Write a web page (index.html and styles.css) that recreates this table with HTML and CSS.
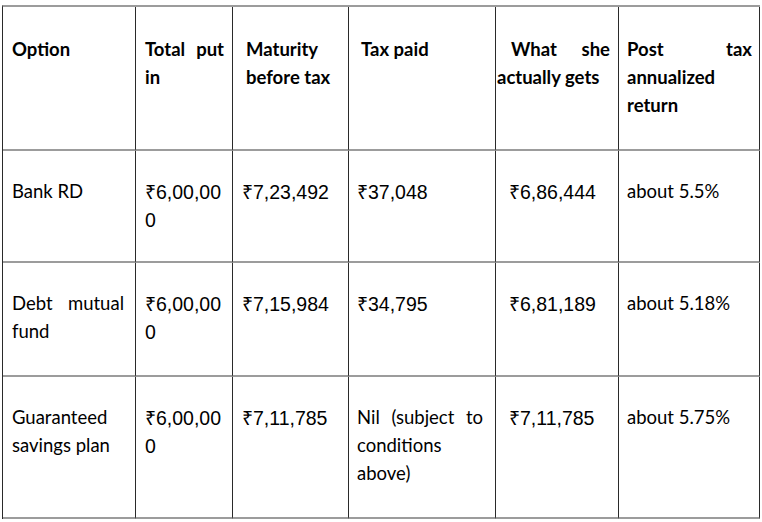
FILE: index.html
```html
<!DOCTYPE html>
<html lang="en">
<head>
<meta charset="utf-8">
<title>Options compared</title>
<link rel="stylesheet" href="styles.css">
</head>
<body>
<div class="sheet">
  <div class="cell head c1">Option</div>
  <div class="cell head c2"><span class="jline">Total put</span>in</div>
  <div class="cell head c3 h3">Maturity<br>before tax</div>
  <div class="cell head c4 h4">Tax paid</div>
  <div class="cell head c5 h5"><span class="jline ind">What she</span>actually gets</div>
  <div class="cell head c6"><span class="jline">Post tax</span>annualized<br>return</div>

  <div class="cell c1">Bank RD</div>
  <div class="cell num c2">₹6,00,00<br>0</div>
  <div class="cell num c3">₹7,23,492</div>
  <div class="cell num c4">₹37,048</div>
  <div class="cell num c5">₹6,86,444</div>
  <div class="cell c6">about 5.5%</div>

  <div class="cell c1"><span class="jline">Debt mutual</span>fund</div>
  <div class="cell num c2">₹6,00,00<br>0</div>
  <div class="cell num c3">₹7,15,984</div>
  <div class="cell num c4">₹34,795</div>
  <div class="cell num c5">₹6,81,189</div>
  <div class="cell c6">about 5.18%</div>

  <div class="cell c1">Guaranteed<br>savings plan</div>
  <div class="cell num c2">₹6,00,00<br>0</div>
  <div class="cell num c3">₹7,11,785</div>
  <div class="cell c4 b4"><span class="jline">Nil (subject to</span>conditions<br>above)</div>
  <div class="cell num c5">₹7,11,785</div>
  <div class="cell c6">about 5.75%</div>
</div>
</body>
</html>
```

FILE: styles.css
```css
html, body {
  margin: 0;
  padding: 0;
  background: #ffffff;
}

.sheet {
  display: grid;
  grid-template-columns: 133px 97px 116px 147px 123px 141px;
  grid-template-rows: 144px 112px 114px 142px;
  width: max-content;
  margin: 5px 0 0 2px;
  border-left: 1px solid #2a2a2a;
  border-top: 2px solid #9c9c9c;
}

.cell {
  box-sizing: border-box;
  border-right: 1px solid #2a2a2a;
  border-bottom: 2px solid #9c9c9c;
  padding: 26px 9px 0 9px;
  font-family: Lato, "Noto Sans", sans-serif;
  font-size: 18.5px;
  line-height: 28px;
  color: #000000;
}

.head {
  padding-top: 28px;
  font-weight: 700;
}

.num {
  padding-top: 27px;
  font-family: "Liberation Sans", Arial, sans-serif;
  font-size: 19.5px;
}

.jline {
  display: block;
  white-space: nowrap;
  text-align: justify;
  text-align-last: justify;
}

.ind {
  text-indent: 14px;
}

.c1 { padding-left: 9px; padding-right: 11px; }
.c2 { padding-left: 9px; padding-right: 8px; }
.c3 { padding-left: 9px; padding-right: 8px; }
.c4 { padding-left: 8px; padding-right: 12px; }
.c5 { padding-left: 13px; padding-right: 8px; }
.c6 { padding-left: 8px; padding-right: 7px; }

.h3 { padding-left: 13px; }
.h4 { padding-left: 12px; }
.h5 { padding-left: 1px; }
```
